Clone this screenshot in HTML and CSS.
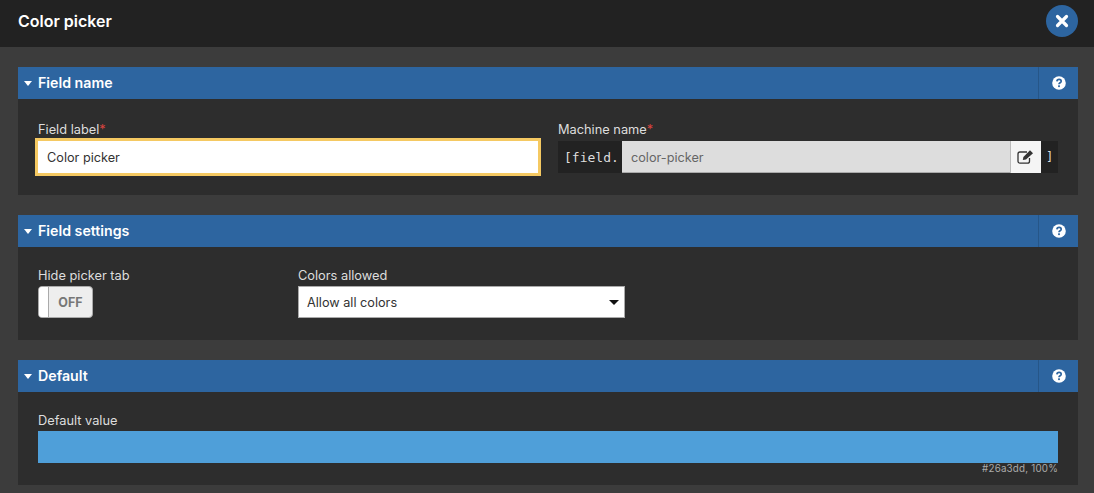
FILE: index.html
```html
<!DOCTYPE html>
<html lang="en">
<head>
<meta charset="utf-8">
<title>Color picker</title>
<link rel="stylesheet" href="styles.css">
</head>
<body>
<header class="top">
  <h1 class="title">Color picker</h1>
  <button class="close" aria-label="Close">
    <svg width="14" height="14" viewBox="0 0 14 14"><path d="M2.5 2.5l9 9M11.5 2.5l-9 9" stroke="#fff" stroke-width="3.2" stroke-linecap="round"/></svg>
  </button>
</header>
<main class="content">
  <section class="panel">
    <div class="panel-head">
      <span class="caret"></span><h2 class="panel-title">Field name</h2>
      <span class="help"><svg width="14" height="14" viewBox="0 0 14 14"><circle cx="7" cy="7" r="6.8" fill="#fff"/><path d="M4.9 5.4c.1-1.3 1-2 2.2-2 1.200 0 2.100.7 2.100 1.800 0 1.700-2.200 1.500-2.200 3.100" fill="none" stroke="#2d65a0" stroke-width="1.700"/><rect x="6.100" y="9.300" width="1.800" height="1.800" fill="#2d65a0"/></svg></span>
    </div>
    <div class="panel-body name-body">
      <div class="field">
        <label class="label">Field label<span class="req">*</span></label>
        <div class="text-input focused">Color picker</div>
      </div>
      <div class="field">
        <label class="label">Machine name<span class="req">*</span></label>
        <div class="machine">
          <span class="prefix">[field.</span>
          <span class="machine-value">color-picker</span>
          <span class="edit"><svg width="18" height="16" viewBox="0 0 18 16"><path d="M12.500 9v3.200a2 2 0 0 1-2 2H3a2 2 0 0 1-2-2V5a2 2 0 0 1 2-2h7" fill="none" stroke="#333" stroke-width="1.300"/><path d="M5.800 11l.6-3L13 1.200l3 3L9 10.500z" fill="#333"/></svg></span>
          <span class="suffix">]</span>
        </div>
      </div>
    </div>
  </section>
  <section class="panel">
    <div class="panel-head">
      <span class="caret"></span><h2 class="panel-title">Field settings</h2>
      <span class="help"><svg width="14" height="14" viewBox="0 0 14 14"><circle cx="7" cy="7" r="6.8" fill="#fff"/><path d="M4.9 5.4c.1-1.3 1-2 2.2-2 1.200 0 2.100.7 2.100 1.800 0 1.700-2.200 1.500-2.200 3.100" fill="none" stroke="#2d65a0" stroke-width="1.700"/><rect x="6.100" y="9.300" width="1.800" height="1.800" fill="#2d65a0"/></svg></span>
    </div>
    <div class="panel-body settings-body">
      <div class="toggle-field">
        <label class="label">Hide picker tab</label>
        <div class="toggle"><span class="knob"></span><span class="toggle-text">OFF</span></div>
      </div>
      <div class="select-field">
        <label class="label">Colors allowed</label>
        <div class="select">Allow all colors<span class="select-arrow"></span></div>
      </div>
    </div>
  </section>
  <section class="panel">
    <div class="panel-head">
      <span class="caret"></span><h2 class="panel-title">Default</h2>
      <span class="help"><svg width="14" height="14" viewBox="0 0 14 14"><circle cx="7" cy="7" r="6.8" fill="#fff"/><path d="M4.9 5.4c.1-1.3 1-2 2.2-2 1.200 0 2.100.7 2.100 1.800 0 1.700-2.200 1.500-2.200 3.100" fill="none" stroke="#2d65a0" stroke-width="1.700"/><rect x="6.100" y="9.300" width="1.800" height="1.800" fill="#2d65a0"/></svg></span>
    </div>
    <div class="panel-body default-body">
      <label class="label">Default value</label>
      <div class="swatch"></div>
      <div class="swatch-note">#26a3dd, 100%</div>
    </div>
  </section>
</main>
</body>
</html>
```
FILE: styles.css
```css
* { box-sizing: border-box; }
html, body { margin: 0; height: 100%; }
body {
  background: #3c3c3c;
  font-family: Inter, "Liberation Sans", sans-serif;
  color: #ddd;
  overflow: hidden;
}
.top {
  height: 47px;
  background: #222;
  display: flex;
  align-items: center;
  justify-content: space-between;
  padding: 0 16px 5px 18px;
}
.title { margin: 0; font-size: 16px; font-weight: 600; color: #fff; }
.close {
  width: 32px; height: 32px; padding: 0; border: 0; border-radius: 50%;
  background: #2d65a0;
  display: flex; align-items: center; justify-content: center;
}
.content {
  padding: 20px 16px 0 18px;
  display: flex; flex-direction: column; gap: 20px;
}
.panel { background: #2d2d2d; }
.panel-head {
  height: 32px;
  background: #2d65a0;
  display: flex; align-items: center;
  padding-left: 6px;
}
.caret {
  width: 0; height: 0;
  border-left: 4.500px solid transparent;
  border-right: 4.500px solid transparent;
  border-top: 5px solid #fff;
  margin-right: 5px;
}
.panel-title { margin: 0; padding-left: 1px; font-size: 14.200px; font-weight: 600; line-height: 32px; height: 32px; color: #fff; flex: 1; }
.help {
  width: 40px; height: 32px;
  border-left: 1px solid #265688;
  display: flex; align-items: center; justify-content: center;
}
.panel-body { padding-left: 20px; padding-right: 20px; }
.label { display: block; font-size: 12.800px; line-height: 19px; color: #ddd; margin-top: -1px; }
.req { color: #d9433f; }
.name-body { display: flex; gap: 20px; padding-top: 20px; height: 96px; }
.field { width: 500px; }
.name-body .label { line-height: 23px; }
.text-input {
  height: 32px; background: #fff; color: #333;
  font-size: 12.700px; line-height: 33px; padding-left: 9px;
  box-shadow: 0 0 0 3px #f5c962;
}
.machine { display: flex; height: 32px; font-size: 12.700px; }
.prefix {
  width: 64px; background: #222; color: #ddd;
  font-family: "DejaVu Sans Mono", monospace; font-size: 13px; line-height: 33px;
  padding-left: 6px; white-space: nowrap; overflow: hidden;
}
.machine-value {
  flex: 1; background: #ddd; color: #666; line-height: 33px;
  padding-left: 9px; border-bottom: 1px solid #aaa;
}
.edit {
  width: 31px; background: #f5f5f5; border-left: 1px solid #bbb;
  display: flex; align-items: center; justify-content: center;
}
.suffix {
  width: 17px; background: #222; color: #ddd; text-align: center;
  font-family: "DejaVu Sans Mono", monospace; font-size: 12px; line-height: 32px;
}
.settings-body { display: flex; padding-top: 20px; height: 93px; }
.toggle-field { width: 260px; }
.select-field { width: 327px; }
.toggle {
  width: 55px; height: 32px; display: flex; margin-top: 1px;
  background: #eee; border: 1px solid #aaa; border-radius: 4px; overflow: hidden;
}
.settings-body .select { margin-top: 1px; }
.knob { width: 10px; background: #fff; border-right: 1px solid #aaa; }
.toggle-text { flex: 1; text-align: center; font-size: 12.500px; font-weight: 700; line-height: 31px; color: #777; }
.select {
  height: 32px; background: #fff; color: #333; font-size: 12.700px; line-height: 30px;
  padding: 1px 0 0 8px; border: 1px solid #aaa; display: flex; justify-content: space-between; align-items: center;
}
.select-arrow {
  width: 0; height: 0; margin-right: 5px;
  border-left: 5px solid transparent; border-right: 5px solid transparent; border-top: 5px solid #111;
}
.default-body { padding-top: 20px; height: 93px; }
.default-body .swatch { margin-top: 1px; }
.swatch { height: 32px; background: #4f9fd9; }
.swatch-note { font-size: 9.800px; line-height: 12px; margin-top: 0; text-align: right; color: #aaa; letter-spacing: .2px; }
```
